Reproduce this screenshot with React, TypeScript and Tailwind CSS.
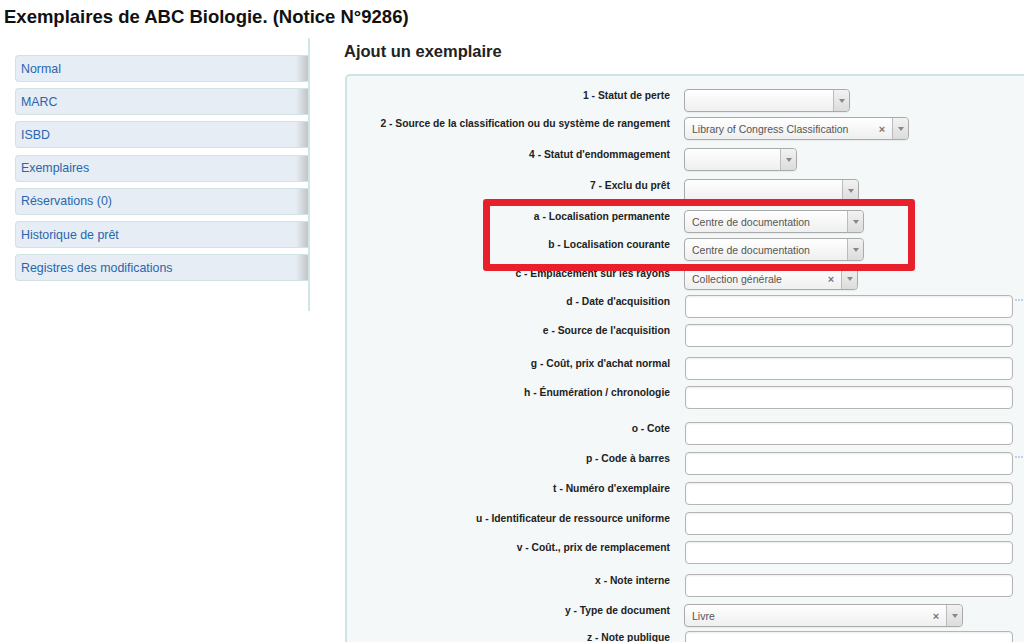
type Row = {
  label: string;
  h: string;
  kind: "select" | "input";
  w?: string;
  value?: string;
  clear?: boolean;
  dots?: boolean;
};

const tabs = [
  "Normal",
  "MARC",
  "ISBD",
  "Exemplaires",
  "Réservations (0)",
  "Historique de prêt",
  "Registres des modifications",
];

const rows: Row[] = [
  { label: "1 - Statut de perte", h: "h-[28px]", kind: "select", w: "w-[166px]" },
  {
    label: "2 - Source de la classification ou du système de rangement",
    h: "h-[31px]",
    kind: "select",
    w: "w-[225px]",
    value: "Library of Congress Classification",
    clear: true,
  },
  { label: "4 - Statut d'endommagement", h: "h-[31px]", kind: "select", w: "w-[113px]" },
  { label: "7 - Exclu du prêt", h: "h-[31px]", kind: "select", w: "w-[175px]" },
  {
    label: "a - Localisation permanente",
    h: "h-[28px]",
    kind: "select",
    w: "w-[180px]",
    value: "Centre de documentation",
  },
  {
    label: "b - Localisation courante",
    h: "h-[29px]",
    kind: "select",
    w: "w-[180px]",
    value: "Centre de documentation",
  },
  {
    label: "c - Emplacement sur les rayons",
    h: "h-[28px]",
    kind: "select",
    w: "w-[174px]",
    value: "Collection générale",
    clear: true,
  },
  { label: "d - Date d'acquisition", h: "h-[29px]", kind: "input", dots: true },
  { label: "e - Source de l'acquisition", h: "h-[33px]", kind: "input" },
  { label: "g - Coût, prix d'achat normal", h: "h-[29px]", kind: "input" },
  { label: "h - Énumération / chronologie", h: "h-[36px]", kind: "input" },
  { label: "o - Cote", h: "h-[30px]", kind: "input" },
  { label: "p - Code à barres", h: "h-[30px]", kind: "input", dots: true },
  { label: "t - Numéro d'exemplaire", h: "h-[30px]", kind: "input" },
  { label: "u - Identificateur de ressource uniforme", h: "h-[29px]", kind: "input" },
  { label: "v - Coût., prix de remplacement", h: "h-[33px]", kind: "input" },
  { label: "x - Note interne", h: "h-[30px]", kind: "input" },
  {
    label: "y - Type de document",
    h: "h-[27px]",
    kind: "select",
    w: "w-[279px]",
    value: "Livre",
    clear: true,
  },
  { label: "z - Note publique", h: "h-[29px]", kind: "input" },
];

function Select({ w, value, clear }: { w?: string; value?: string; clear?: boolean }) {
  return (
    <div
      className={`flex h-[23px] items-stretch rounded-[4px] border border-[#aaaaaa] bg-linear-to-b from-white to-[#efefef] shadow-[0_1px_1px_rgba(0,0,0,0.05)] ${w}`}
    >
      <div className="flex flex-1 items-center overflow-hidden whitespace-nowrap pl-[7px] pt-[2px] text-[10.5px] text-[#555]">
        {value}
      </div>
      {clear && (
        <div className="flex w-[20px] items-center justify-center pt-[2px] text-[11px] font-bold leading-none text-[#777]">
          ×
        </div>
      )}
      <div className="flex w-[16px] items-center justify-center rounded-r-[4px] border-l border-[#bbbbbb] bg-linear-to-b from-[#f2f2f2] to-[#dcdcdc]">
        <svg width="6" height="4" viewBox="0 0 6 4">
          <path d="M0 0h6L3 4z" fill="#888" />
        </svg>
      </div>
    </div>
  );
}

function Input({ dots }: { dots?: boolean }) {
  return (
    <div className="flex items-start">
      <div className="ml-[1px] h-[23px] w-[328px] rounded-[4px] border border-[#b4b4b4] bg-white shadow-[inset_0_1px_2px_rgba(0,0,0,0.08)]" />
      {dots && (
        <svg className="ml-[2px] mt-[4px]" width="8" height="2" viewBox="0 0 8 2">
          <circle cx="1" cy="1" r="0.8" fill="#7aa6d6" />
          <circle cx="4" cy="1" r="0.8" fill="#7aa6d6" />
          <circle cx="7" cy="1" r="0.8" fill="#7aa6d6" />
        </svg>
      )}
    </div>
  );
}

export default function App() {
  return (
    <div className="relative h-[642px] w-[1024px] overflow-hidden bg-white font-['Liberation_Sans',Arial,sans-serif]">
      <h1 className="h-[38px] pl-[4px] pt-[6px] text-[18.5px] font-bold leading-[22px] text-[#111]">
        Exemplaires de ABC Biologie. (Notice N°9286)
      </h1>

      <div className="flex items-start">
        {/* sidebar */}
        <div className="w-[310px] shrink-0 border-r-2 border-[#cfe5e6] pb-[30px] pl-[15px] pt-[17px]">
          <ul className="flex flex-col gap-[6.2px]">
            {tabs.map((t) => (
              <li
                key={t}
                className="flex h-[27px] items-stretch overflow-hidden rounded-l-[4px] border border-r-0 border-[#cfe3e5] bg-[#e6edf4]"
              >
                <span className="flex flex-1 items-center pl-[5px] pt-[1px] text-[12.4px] text-[#2a66ad]">
                  {t}
                </span>
                <span className="w-[12px] bg-linear-to-r from-[#e6edf4] to-[#c3c4c6]" />
              </li>
            ))}
          </ul>
        </div>

        {/* main */}
        <div className="flex-1">
          <h2 className="ml-[34px] pb-[13px] pt-[3px] text-[16.5px] font-bold leading-[20px] text-[#222]">
            Ajout un exemplaire
          </h2>
          <div className="ml-[35px] w-[700px] rounded-tl-[5px] border-2 border-[#cfe3e5] bg-[#f4f8f9] pt-[13px]">
            {rows.map((r) => (
              <div key={r.label} className={`flex items-start ${r.h}`}>
                <div className="w-[323px] shrink-0 pt-[1px] text-right text-[10.3px] font-bold leading-[12px] text-[#222]">
                  {r.label}
                </div>
                <div className="ml-[14px]">
                  {r.kind === "select" ? (
                    <Select w={r.w} value={r.value} clear={r.clear} />
                  ) : (
                    <Input dots={r.dots} />
                  )}
                </div>
              </div>
            ))}
          </div>
        </div>
      </div>

      {/* red highlight box */}
      <div className="absolute left-[483px] top-[199px] h-[72px] w-[432px] rounded-[3px] border-[7px] border-[#e8202b]" />
    </div>
  );
}
